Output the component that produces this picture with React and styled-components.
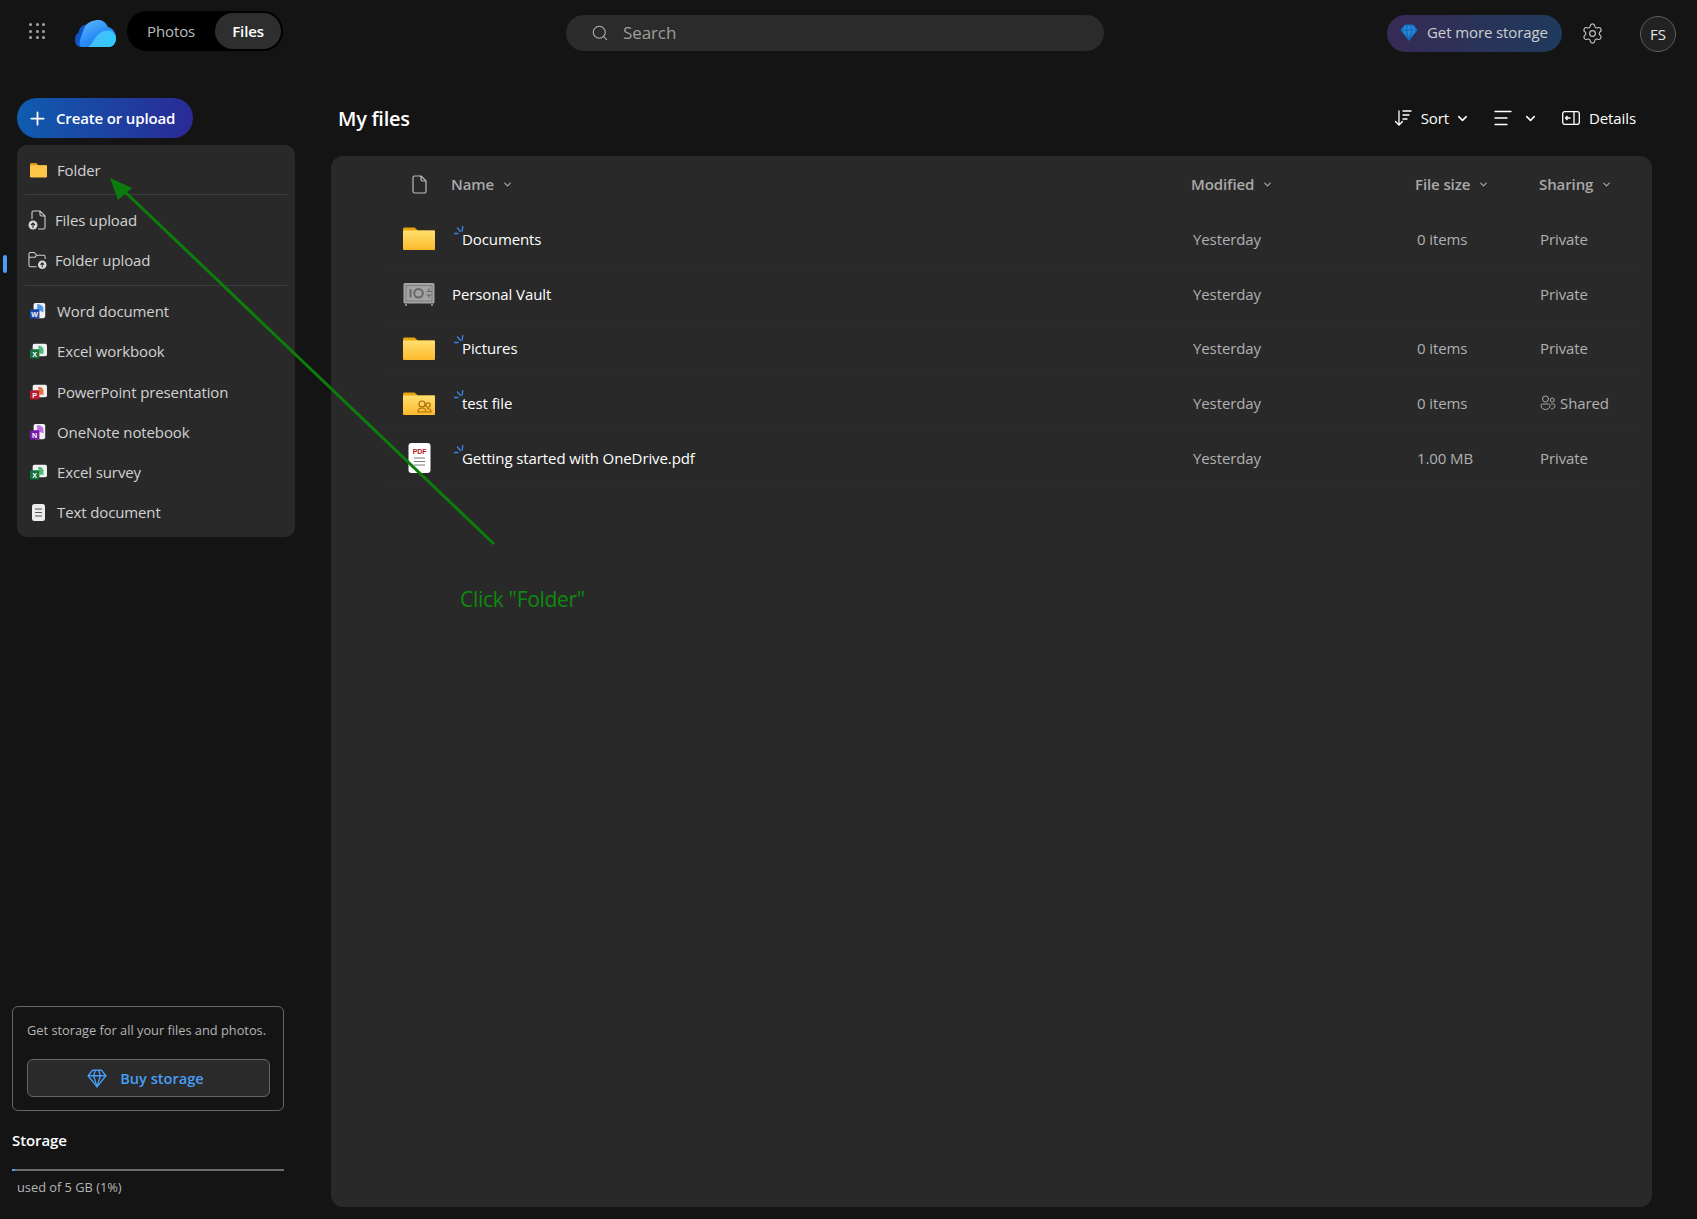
import React from "react";
import styled, { createGlobalStyle } from "styled-components";
import { Plus, Search, Settings, ChevronDown } from "lucide-react";

const GlobalStyle = createGlobalStyle`
  html, body {
    margin: 0;
    padding: 0;
    background: #141414;
    font-family: "Open Sans", "Noto Sans", sans-serif;
    overflow: hidden;
  }
  * { box-sizing: border-box; }
`;

const Page = styled.div`
  position: relative;
  width: 1697px;
  height: 1219px;
  display: flex;
  flex-direction: column;
  background: #141414;
  color: #fff;
  font-size: 15px;
  letter-spacing: -0.1px;
`;

/* top bar */
const TopBar = styled.header`
  height: 66px;
  flex: none;
  display: flex;
  align-items: flex-start;
  padding-right: 21px;
`;

const TopLeft = styled.div`
  width: 566px;
  flex: none;
  display: flex;
  align-items: center;
  height: 62px;
  padding-left: 29px;
`;

const Waffle = styled.div`
  display: grid;
  grid-template-columns: repeat(3, 3px);
  gap: 3.5px;
  margin-right: 30px;
  span {
    width: 3px;
    height: 3px;
    border-radius: 50%;
    background: #a6a6a6;
  }
`;

const Switcher = styled.div`
  display: flex;
  align-items: center;
  height: 40px;
  width: 156px;
  margin-left: 11px;
  padding: 2px;
  border-radius: 20px;
  background: #000;
`;

const SwitchTab = styled.div`
  height: 36px;
  padding: 0 ${(p) => (p.$active ? "17px" : "18px")};
  margin-left: ${(p) => (p.$active ? "auto" : "0")};
  display: flex;
  align-items: center;
  border-radius: 18px;
  font-weight: ${(p) => (p.$active ? 600 : 400)};
  color: ${(p) => (p.$active ? "#fff" : "#bdbdbd")};
  background: ${(p) => (p.$active ? "#2e2e2e" : "transparent")};
`;

const SearchBox = styled.div`
  width: 538px;
  height: 36px;
  margin-top: 15px;
  padding: 0 0 1px 25px;
  display: flex;
  align-items: center;
  gap: 14px;
  border-radius: 18px;
  background: #2b2b2b;
  color: #9e9e9e;
  font-size: 17px;
`;

const TopRight = styled.div`
  margin-left: auto;
  margin-top: 15px;
  display: flex;
  align-items: center;
`;

const StoragePill = styled.div`
  width: 175px;
  height: 37px;
  padding: 0 0 3px 13px;
  display: flex;
  align-items: center;
  gap: 9px;
  border-radius: 19px;
  background: linear-gradient(90deg, #372b55, #1e3a5c);
  color: #cfcfcf;
  font-size: 15px;
`;

const GearWrap = styled.div`
  margin-left: 19px;
  display: flex;
  color: #c4c4c4;
`;

const Avatar = styled.div`
  margin-left: 36px;
  width: 36px;
  height: 36px;
  border-radius: 50%;
  border: 1.5px solid #5e5e5e;
  background: #222;
  display: flex;
  align-items: center;
  justify-content: center;
  font-size: 15px;
  color: #e6e6e6;
`;

/* body */
const Body = styled.div`
  flex: 1;
  min-height: 0;
  display: flex;
`;

const Sidebar = styled.aside`
  position: relative;
  width: 331px;
  flex: none;
  display: flex;
  flex-direction: column;
  padding: 32px 0 23px 12px;
`;

const Marker = styled.div`
  position: absolute;
  left: 3px;
  top: 189px;
  width: 4px;
  height: 18px;
  border-radius: 2px;
  background: #479ef5;
`;

const CreateButton = styled.div`
  width: 176px;
  height: 40px;
  margin-left: 5px;
  padding-left: 10px;
  display: flex;
  align-items: center;
  gap: 8px;
  border-radius: 20px;
  background: linear-gradient(90deg, #0f5cb0, #2a2a96);
  color: #fff;
  font-weight: 600;
  letter-spacing: -0.15px;
`;

const Menu = styled.div`
  width: 278px;
  margin: 7px 0 0 5px;
  padding: 5px 0 4px;
  border-radius: 10px;
  background: #292929;
  letter-spacing: -0.12px;
`;

const MenuRow = styled.div`
  height: ${(p) => (p.$office ? 40.25 : 40)}px;
  display: flex;
  align-items: center;
  gap: ${(p) => (p.$upload ? 8 : 10)}px;
  padding-left: ${(p) => (p.$upload ? 11 : 13)}px;
  color: #d2d2d2;
`;

const MenuIcon = styled.span`
  width: ${(p) => (p.$upload ? 19 : 17)}px;
  height: 20px;
  flex: none;
  display: flex;
  align-items: center;
  justify-content: center;
`;

const MenuDivider = styled.div`
  height: 1px;
  margin: ${(p) => p.$m || "4px 8px 5px"};
  background: #3d3d3d;
`;

const Promo = styled.div`
  margin-top: auto;
  width: 272px;
  height: 105px;
  padding: 14px 13px 0 14px;
  border: 1px solid #666;
  border-radius: 6px;
  color: #b5b5b5;
  font-size: 12.8px;
  line-height: 18px;
  letter-spacing: 0;
`;

const BuyButton = styled.div`
  height: 38px;
  margin-top: 20px;
  padding-right: 6px;
  display: flex;
  align-items: center;
  justify-content: center;
  gap: 13px;
  border: 1px solid #666;
  border-radius: 6px;
  background: #2a2a2a;
  color: #479ef5;
  font-size: 14.6px;
  font-weight: 600;
`;

const StorageTitle = styled.div`
  margin-top: 19px;
  font-weight: 600;
  font-size: 15px;
  line-height: 20px;
`;

const StorageBar = styled.div`
  width: 272px;
  height: 2px;
  margin-top: 19px;
  background: #6b6b6b;
  span {
    display: block;
    height: 100%;
    background: #479ef5;
  }
`;

const StorageUsed = styled.div`
  margin: 7px 0 0 5px;
  color: #b5b5b5;
  font-size: 12.8px;
  line-height: 18px;
  letter-spacing: 0;
`;

/* main */
const Main = styled.main`
  flex: 1;
  min-width: 0;
  display: flex;
  flex-direction: column;
  padding: 0 45px 12px 0;
`;

const Toolbar = styled.div`
  height: 90px;
  flex: none;
  padding: 34px 16px 20px 7px;
  display: flex;
  align-items: center;
`;

const PageTitle = styled.h1`
  margin: 0;
  font-size: 20px;
  font-weight: 600;
  letter-spacing: -0.3px;
`;

const Tools = styled.div`
  margin-left: auto;
  display: flex;
  align-items: center;
  color: #fff;
`;

const Tool = styled.div`
  display: flex;
  align-items: center;
  gap: ${(p) => p.$gap || 9}px;
  margin-left: ${(p) => p.$ml || 0}px;
`;

const SortChevron = styled(ChevronDown)`
  margin-left: -3px;
`;

const Panel = styled.section`
  flex: 1;
  min-height: 0;
  padding-top: 1px;
  border-radius: 12px;
  background: #292929;
`;

const Row = styled.div`
  display: grid;
  grid-template-columns: ${(p) =>
    p.$head ? "48px 740px 224px 124px 1fr" : "49px 741px 224px 123px 1fr"};
  align-items: center;
  height: ${(p) => (p.$head ? 55 : 54.8)}px;
  margin: 0 12px 0 58px;
  padding-left: 14px;
  border-bottom: 1px solid ${(p) => (p.$head ? "transparent" : "#2c2c2c")};
  color: #b0b0b0;
`;

const HeadCell = styled.div`
  display: flex;
  align-items: center;
  gap: 8px;
  font-weight: 600;
  color: #a9a9a9;
`;

const IconCell = styled.div`
  display: flex;
  align-items: center;
  justify-content: ${(p) => (p.$center ? "center" : "flex-start")};
  width: 32px;
`;

const NameCell = styled.div`
  display: flex;
  align-items: center;
  color: #fff;
`;

const SyncMark = styled.svg`
  flex: none;
  align-self: flex-start;
  margin: -3px -2px 0 2px;
  width: 10px;
  height: 10px;
`;

const ShareCell = styled.div`
  display: flex;
  align-items: center;
  gap: 4px;
`;

/* annotation */
const Overlay = styled.svg`
  position: absolute;
  left: 0;
  top: 0;
  pointer-events: none;
`;

const Callout = styled.div`
  position: absolute;
  left: 460px;
  top: 585px;
  color: #0e8a0e;
  font-size: 21px;
  line-height: 28px;
  letter-spacing: -0.3px;
`;

/* drawings */
const CloudLogo = () => (
  <svg width="41" height="27" viewBox="0 0 41 27" style={{ marginTop: 5 }}>
    <defs>
      <linearGradient id="cloudMain" x1="0" y1="0" x2="0.7" y2="1">
        <stop offset="0" stopColor="#62bdff" />
        <stop offset="0.6" stopColor="#2a8df5" />
        <stop offset="1" stopColor="#1a78ea" />
      </linearGradient>
      <linearGradient id="cloudWave" x1="0" y1="0" x2="1" y2="0.4">
        <stop offset="0" stopColor="#52b6fb" />
        <stop offset="1" stopColor="#30cbfa" />
      </linearGradient>
    </defs>
    <path d="M6 27C2 27 0 24 0 20C0 16 1.500 14 3.500 12.500C4.500 8 7 5 11 4.500L24 27Z" fill="#0f55c4" />
    <path d="M7 27C4 27 4 22 6 17C8 11 10 4 15 2C18 0.500 21 0 24 0C28 0 31 3 33 7C38 8 41 13 41 18C41 23 38 27 34 27Z" fill="url(#cloudMain)" />
    <path d="M13 27C18 24 20 16 25 13C29 10.500 33 10 36 11C39 13 41 15 41 18C41 23 38 27 34 27Z" fill="url(#cloudWave)" />
  </svg>
);

const Gem = ({ size = 18, color = "#479ef5", solid }) => (
  <svg width={size} height={size} viewBox="0 0 18 18" fill={solid ? color : "none"} stroke={solid ? "#0f6cbd" : color} strokeWidth="1.2" strokeLinejoin="round">
    <path d="M5 2h8l4 5-8 10L1 7z" />
    <path d="M1 7h16M6 7l3 10 3-10M6 7l1.500-5M12 7l-1.500-5" />
  </svg>
);

const FolderGlyph = ({ w = 32, h = 23, shared }) => (
  <svg width={w} height={h} viewBox="0 0 32 23">
    <defs>
      <linearGradient id="folderFill" x1="0" y1="0" x2="0" y2="1">
        <stop offset="0" stopColor="#ffe070" />
        <stop offset="1" stopColor="#fdb92a" />
      </linearGradient>
    </defs>
    <path d="M0 2a1.500 1.500 0 0 1 1.500-1.500h10L15 3.500H32V8H0z" fill="#e8a50e" />
    <rect x="0" y="3.500" width="32" height="19.500" rx="1" fill="url(#folderFill)" />
    {shared && (
      <g fill="none" stroke="#a8690a" strokeWidth="1.100">
        <circle cx="19" cy="12" r="3" />
        <circle cx="25" cy="13" r="2.200" />
        <path d="M15 20c0-3 2-4 4-4s4 1 4 4zM24 16.500c2 0 4 1 4 3.500h-4" />
      </g>
    )}
  </svg>
);

const Vault = () => (
  <svg width="32" height="24" viewBox="0 0 32 24" fill="none">
    <rect x="0.500" y="1" width="31" height="20.500" rx="1.500" fill="#a3a3a3" />
    <rect x="3" y="3.500" width="26" height="15.500" fill="#a3a3a3" stroke="#7d7d7d" />
    <path d="M7.500 7v8.500" stroke="#666" strokeWidth="2" />
    <circle cx="15.500" cy="11.200" r="4.300" stroke="#666" strokeWidth="2" />
    <path d="M26 6v3M26 13v3M23.500 9.500h5M23.500 13h5" stroke="#666" />
    <path d="M3 22v2M29 22v2" stroke="#8c8c8c" strokeWidth="2" />
  </svg>
);

const PdfGlyph = () => (
  <svg width="23" height="30" viewBox="0 0 23 30">
    <rect width="22" height="30" rx="3" x="0.500" fill="#fff" />
    <text x="11.500" y="11" textAnchor="middle" fontFamily="Liberation Sans, sans-serif" fontWeight="700" fontSize="7" fill="#b3171f">PDF</text>
    <path d="M6 15h11M6 18.500h11M6 22h11" stroke="#7a7a7a" strokeWidth="1" />
  </svg>
);

const PageGlyph = () => (
  <svg width="15" height="19" viewBox="0 0 15 19" fill="none" stroke="#bdbdbd" strokeWidth="1.200" strokeLinejoin="round">
    <path d="M2.500 1H9l5 5v10.500a1.500 1.500 0 0 1-1.500 1.500h-10A1.500 1.500 0 0 1 1 16.500v-14A1.500 1.500 0 0 1 2.500 1z" />
    <path d="M9 1v3.500A1.500 1.500 0 0 0 10.500 6H14" />
  </svg>
);

const MenuFolder = () => (
  <svg width="18" height="16" viewBox="0 0 18 16">
    <path d="M0 2a1.500 1.500 0 0 1 1.500-1.500h5L9 3h9v4H0z" fill="#d99a16" />
    <rect y="3" width="18" height="13" rx="1.500" fill="#fdc646" />
  </svg>
);

const UploadFile = () => (
  <svg width="19" height="20" viewBox="0 0 19 20" fill="none" stroke="#cfcfcf" strokeWidth="1.100">
    <path d="M4 9V2.500A1.500 1.500 0 0 1 5.500 1H12l5 5v11.500a1.500 1.500 0 0 1-1.500 1.500H10" />
    <path d="M12 1v3.500A1.500 1.500 0 0 0 13.500 6H17" />
    <circle cx="5" cy="15" r="4.500" fill="#d9d9d9" stroke="none" />
    <path d="M5 18v-5M3 15l2-2 2 2" stroke="#292929" />
  </svg>
);

const UploadFolder = () => (
  <svg width="20" height="20" viewBox="0 0 20 20" fill="none" stroke="#cfcfcf" strokeWidth="1.100">
    <path d="M9 17H2.500A1.500 1.500 0 0 1 1 15.500v-12A1.500 1.500 0 0 1 2.500 2h4L9 5h7.500A1.500 1.500 0 0 1 18 6.500V9" />
    <path d="M1 7h6.500L9 5" />
    <circle cx="15" cy="15" r="4.500" fill="#d9d9d9" stroke="none" />
    <path d="M15 18v-5M13 15l2-2 2 2" stroke="#292929" />
  </svg>
);

const OfficeGlyph = ({ badge, letter, shape, tall }) => (
  <svg width="19" height="18" viewBox="0 0 19 18">
    <rect x={tall ? 4 : 3} y={tall ? 0 : 1} width={tall ? 13 : 16} height={tall ? 17 : 14} rx="2" fill="#f1f1f1" />
    <path d={tall ? "M8 1.500c4 0 7 2 7 5v4l-7-3z" : "M9 3c3.500 0 6 1.500 6 4.500v4.500H11z"} fill={shape} opacity="0.9" />
    <rect x="0" y="7" width="10.500" height="10.500" rx="1.500" fill={badge} />
    <text x="5.200" y="15.500" textAnchor="middle" fontFamily="Liberation Sans, sans-serif" fontWeight="700" fontSize="8" fill="#fff">{letter}</text>
  </svg>
);

const TextDoc = () => (
  <svg width="13" height="17" viewBox="0 0 13 17">
    <rect width="13" height="17" rx="2.500" fill="#ececec" />
    <path d="M3 5h7M3 8.500h7M3 12h7" stroke="#555" strokeWidth="1.200" />
  </svg>
);

const SortGlyph = () => (
  <svg width="18" height="18" viewBox="0 0 18 18" fill="none" stroke="#fff" strokeWidth="1.300" strokeLinecap="round">
    <path d="M5 2v14M1.500 12.500 5 16l3.500-3.500M9 2h8M9 6h6M9 10h4" />
  </svg>
);

const LinesGlyph = () => (
  <svg width="18" height="16" viewBox="0 0 18 16" fill="none" stroke="#fff" strokeWidth="1.300" strokeLinecap="round">
    <path d="M1 1.500h16M1 8h12M1 14.500h12" />
  </svg>
);

const DetailsGlyph = () => (
  <svg width="18" height="14" viewBox="0 0 18 14" fill="none" stroke="#fff" strokeWidth="1.300" strokeLinejoin="round">
    <rect x="0.700" y="0.700" width="16.600" height="12.600" rx="2" />
    <path d="M12 1v12M8.500 7H3.500M5.500 5 3.500 7l2 2" />
  </svg>
);

const PeopleGlyph = () => (
  <svg width="16" height="16" viewBox="0 0 16 16" fill="none" stroke="#a9a9a9" strokeWidth="1">
    <circle cx="5.500" cy="4" r="3" />
    <circle cx="12.300" cy="5" r="2" />
    <path d="M1 10.500A1.500 1.500 0 0 1 2.500 9h6A1.500 1.500 0 0 1 10 10.500C10 13 8 14.500 5.500 14.500S1 13 1 10.500zM11 9h2.500a1.500 1.500 0 0 1 1.500 1.500c0 2-1.500 3.500-4 3.500" />
  </svg>
);

const Sparkle = () => (
  <SyncMark viewBox="0 0 10 10" fill="none" stroke="#3a86e8" strokeWidth="1.300" strokeLinecap="round">
    <path d="M0.500 7.500h3.500M3.500 2l3 3.500M8.800 0.500 8.200 5" />
  </SyncMark>
);

const menuTop = [
  { label: "Word document", icon: <OfficeGlyph tall badge="#1a46a8" letter="W" shape="#3f8de8" /> },
  { label: "Excel workbook", icon: <OfficeGlyph badge="#14723e" letter="X" shape="#35b56a" /> },
  { label: "PowerPoint presentation", icon: <OfficeGlyph badge="#b81c2c" letter="P" shape="#e8612c" /> },
  { label: "OneNote notebook", icon: <OfficeGlyph tall badge="#7719aa" letter="N" shape="#b45fe0" /> },
  { label: "Excel survey", icon: <OfficeGlyph badge="#14723e" letter="X" shape="#35b56a" /> },
  { label: "Text document", icon: <TextDoc /> },
];

const files = [
  { name: "Documents", icon: <FolderGlyph />, sync: true, size: "0 items", share: "Private" },
  { name: "Personal Vault", icon: <Vault />, size: "", share: "Private" },
  { name: "Pictures", icon: <FolderGlyph />, sync: true, size: "0 items", share: "Private" },
  { name: "test file", icon: <FolderGlyph shared />, sync: true, size: "0 items", share: "Shared" },
  { name: "Getting started with OneDrive.pdf", icon: <PdfGlyph />, sync: true, size: "1.00 MB", share: "Private", center: true },
];

const columns = ["Modified", "File size", "Sharing"];

const App = () => {
  return (
    <Page>
      <GlobalStyle />
      <TopBar>
        <TopLeft>
          <Waffle>
            {Array.from({ length: 9 }).map((_, i) => (
              <span key={i} />
            ))}
          </Waffle>
          <CloudLogo />
          <Switcher>
            <SwitchTab>Photos</SwitchTab>
            <SwitchTab $active>Files</SwitchTab>
          </Switcher>
        </TopLeft>
        <SearchBox>
          <Search size={18} strokeWidth={1.4} color="#b0b0b0" />
          Search
        </SearchBox>
        <TopRight>
          <StoragePill>
            <Gem solid color="#2b88d8" />
            Get more storage
          </StoragePill>
          <GearWrap>
            <Settings size={23} strokeWidth={1.2} />
          </GearWrap>
          <Avatar>FS</Avatar>
        </TopRight>
      </TopBar>
      <Body>
        <Sidebar>
          <Marker />
          <CreateButton>
            <Plus size={21} strokeWidth={2} />
            Create or upload
          </CreateButton>
          <Menu>
            <MenuRow>
              <MenuIcon>
                <MenuFolder />
              </MenuIcon>
              Folder
            </MenuRow>
            <MenuDivider />
            <MenuRow $upload>
              <MenuIcon $upload>
                <UploadFile />
              </MenuIcon>
              Files upload
            </MenuRow>
            <MenuRow $upload>
              <MenuIcon $upload>
                <UploadFolder />
              </MenuIcon>
              Folder upload
            </MenuRow>
            <MenuDivider $m="5px 8px 5px" />
            {menuTop.map((item) => (
              <MenuRow key={item.label} $office>
                <MenuIcon>{item.icon}</MenuIcon>
                {item.label}
              </MenuRow>
            ))}
          </Menu>
          <Promo>
            Get storage for all your files and photos.
            <BuyButton>
              <Gem size={20} />
              Buy storage
            </BuyButton>
          </Promo>
          <StorageTitle>Storage</StorageTitle>
          <StorageBar>
            <span style={{ width: "1%" }} />
          </StorageBar>
          <StorageUsed>used of 5 GB (1%)</StorageUsed>
        </Sidebar>
        <Main>
          <Toolbar>
            <PageTitle>My files</PageTitle>
            <Tools>
              <Tool>
                <SortGlyph />
                Sort
                <SortChevron size={15} strokeWidth={2.4} />
              </Tool>
              <Tool $ml={24} $gap={11}>
                <LinesGlyph />
                <ChevronDown size={15} strokeWidth={2.4} />
              </Tool>
              <Tool $ml={24}>
                <DetailsGlyph />
                Details
              </Tool>
            </Tools>
          </Toolbar>
          <Panel>
            <Row $head>
              <IconCell $center>
                <PageGlyph />
              </IconCell>
              <HeadCell>
                Name
                <ChevronDown size={11} strokeWidth={2.4} />
              </HeadCell>
              {columns.map((c) => (
                <HeadCell key={c}>
                  {c}
                  <ChevronDown size={11} strokeWidth={2.4} />
                </HeadCell>
              ))}
            </Row>
            {files.map((f) => (
              <Row key={f.name}>
                <IconCell $center={f.center}>{f.icon}</IconCell>
                <NameCell>
                  {f.sync && <Sparkle />}
                  {f.name}
                </NameCell>
                <div>Yesterday</div>
                <div>{f.size}</div>
                <ShareCell>
                  {f.share === "Shared" && <PeopleGlyph />}
                  {f.share}
                </ShareCell>
              </Row>
            ))}
          </Panel>
        </Main>
      </Body>
      <Overlay width="1697" height="1219" viewBox="0 0 1697 1219">
        <path d="M494 544 122 189" stroke="#0c7d0c" strokeWidth="3" />
        <path d="M110 178 132 188 118 200z" fill="#0c7d0c" />
      </Overlay>
      <Callout>Click "Folder"</Callout>
    </Page>
  );
};

export default App;
